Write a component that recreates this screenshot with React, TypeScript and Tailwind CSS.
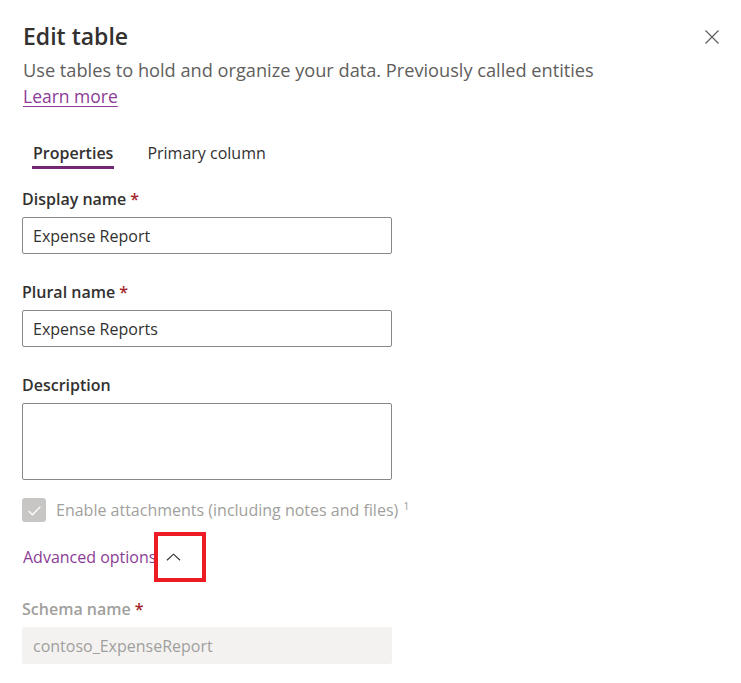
import React from "react";

const font = { fontFamily: '"Open Sans", "Noto Sans", sans-serif' };

function Label({ text, required, disabled }: { text: string; required?: boolean; disabled?: boolean }) {
  return (
    <div className={`h-[24px] leading-[24px] text-[16px] font-semibold ${disabled ? "text-[#a19f9d]" : "text-[#323130]"}`}>
      {text}
      {required && <span className="text-[#a4262c] ml-[4px]">*</span>}
    </div>
  );
}

export default function App() {
  return (
    <div className="w-[741px] h-[683px] bg-white overflow-hidden relative" style={font}>
      <button className="absolute left-[704px] top-[29px] w-[16px] h-[16px] text-[#605e5c]">
        <svg viewBox="0 0 16 16" width="16" height="16" fill="none" stroke="currentColor" strokeWidth="1.2">
          <path d="M1.5 1.5 L14.5 14.5 M14.5 1.5 L1.5 14.5" />
        </svg>
      </button>
      <div className="pl-[22px] pt-[20px] flex flex-col">
        <h1 className="h-[32px] leading-[32px] text-[23px] font-semibold text-[#323130] ml-[1px]">Edit table</h1>
        <p className="mt-[5px] h-[26px] leading-[26px] text-[18.2px] text-[#605e5c] ml-[1px]">
          Use tables to hold and organize your data. Previously called entities
        </p>
        <a className="h-[26px] leading-[26px] text-[17.5px] text-[#8b3c95] underline underline-offset-[3px] w-fit ml-[1px]">
          Learn more
        </a>
        <div className="mt-[32px] flex items-start gap-[33px] ml-[10px] h-[34px]">
          <div className="flex flex-col items-center">
            <span className="h-[24px] leading-[24px] text-[16px] font-semibold text-[#323130] px-[1px]">Properties</span>
            <span className="mt-[1px] h-[3px] w-[82px] bg-[#742774]" />
          </div>
          <span className="h-[24px] leading-[24px] text-[16px] text-[#323130]">Primary column</span>
        </div>
        <div className="mt-[12px]">
          <Label text="Display name" required />
        </div>
        <div className="mt-[6px] w-[370px] h-[37px] border border-[#8a8886] rounded-[2px] px-[10px] flex items-center text-[16px] text-[#323130]">
          Expense Report
        </div>
        <div className="mt-[26px]">
          <Label text="Plural name" required />
        </div>
        <div className="mt-[6px] w-[370px] h-[37px] border border-[#8a8886] rounded-[2px] px-[10px] flex items-center text-[16px] text-[#323130]">
          Expense Reports
        </div>
        <div className="mt-[26px]">
          <Label text="Description" />
        </div>
        <div className="mt-[6px] w-[370px] h-[77px] border border-[#8a8886] rounded-[2px]" />
        <div className="mt-[18px] flex items-center h-[24px]">
          <div className="w-[24px] h-[24px] rounded-[3px] bg-[#c8c6c4] flex items-center justify-center">
            <svg viewBox="0 0 16 16" width="17" height="17" fill="none" stroke="white" strokeWidth="1.2">
              <path d="M2.5 8.5 L6 12 L13.5 4.5" />
            </svg>
          </div>
          <span className="ml-[10px] text-[16px] text-[#a19f9d] leading-[24px]">
            Enable attachments (including notes and files)<sup className="text-[11px] ml-[5px] relative top-[-6px]">1</sup>
          </span>
        </div>
        <div className="mt-[10px] h-[50px] flex items-center">
          <span className="text-[16px] text-[#8b3c95] leading-[24px] ml-[1px]">Advanced options</span>
          <div className="relative ml-[-2px] w-[52px] h-[50px] border-[4px] border-[#ed1c24] flex items-center justify-start pl-[8px]">
            <svg viewBox="0 0 16 8" width="15" height="8" fill="none" stroke="#323130" strokeWidth="1.2">
              <path d="M1 7.5 L8 1 L15 7.5" />
            </svg>
          </div>
        </div>
        <div className="mt-[15px]">
          <Label text="Schema name" required disabled />
        </div>
        <div className="mt-[6px] w-[370px] h-[37px] bg-[#f3f2f1] rounded-[2px] px-[11px] flex items-center text-[16px] text-[#a19f9d]">
          contoso_ExpenseReport
        </div>
      </div>
    </div>
  );
}
